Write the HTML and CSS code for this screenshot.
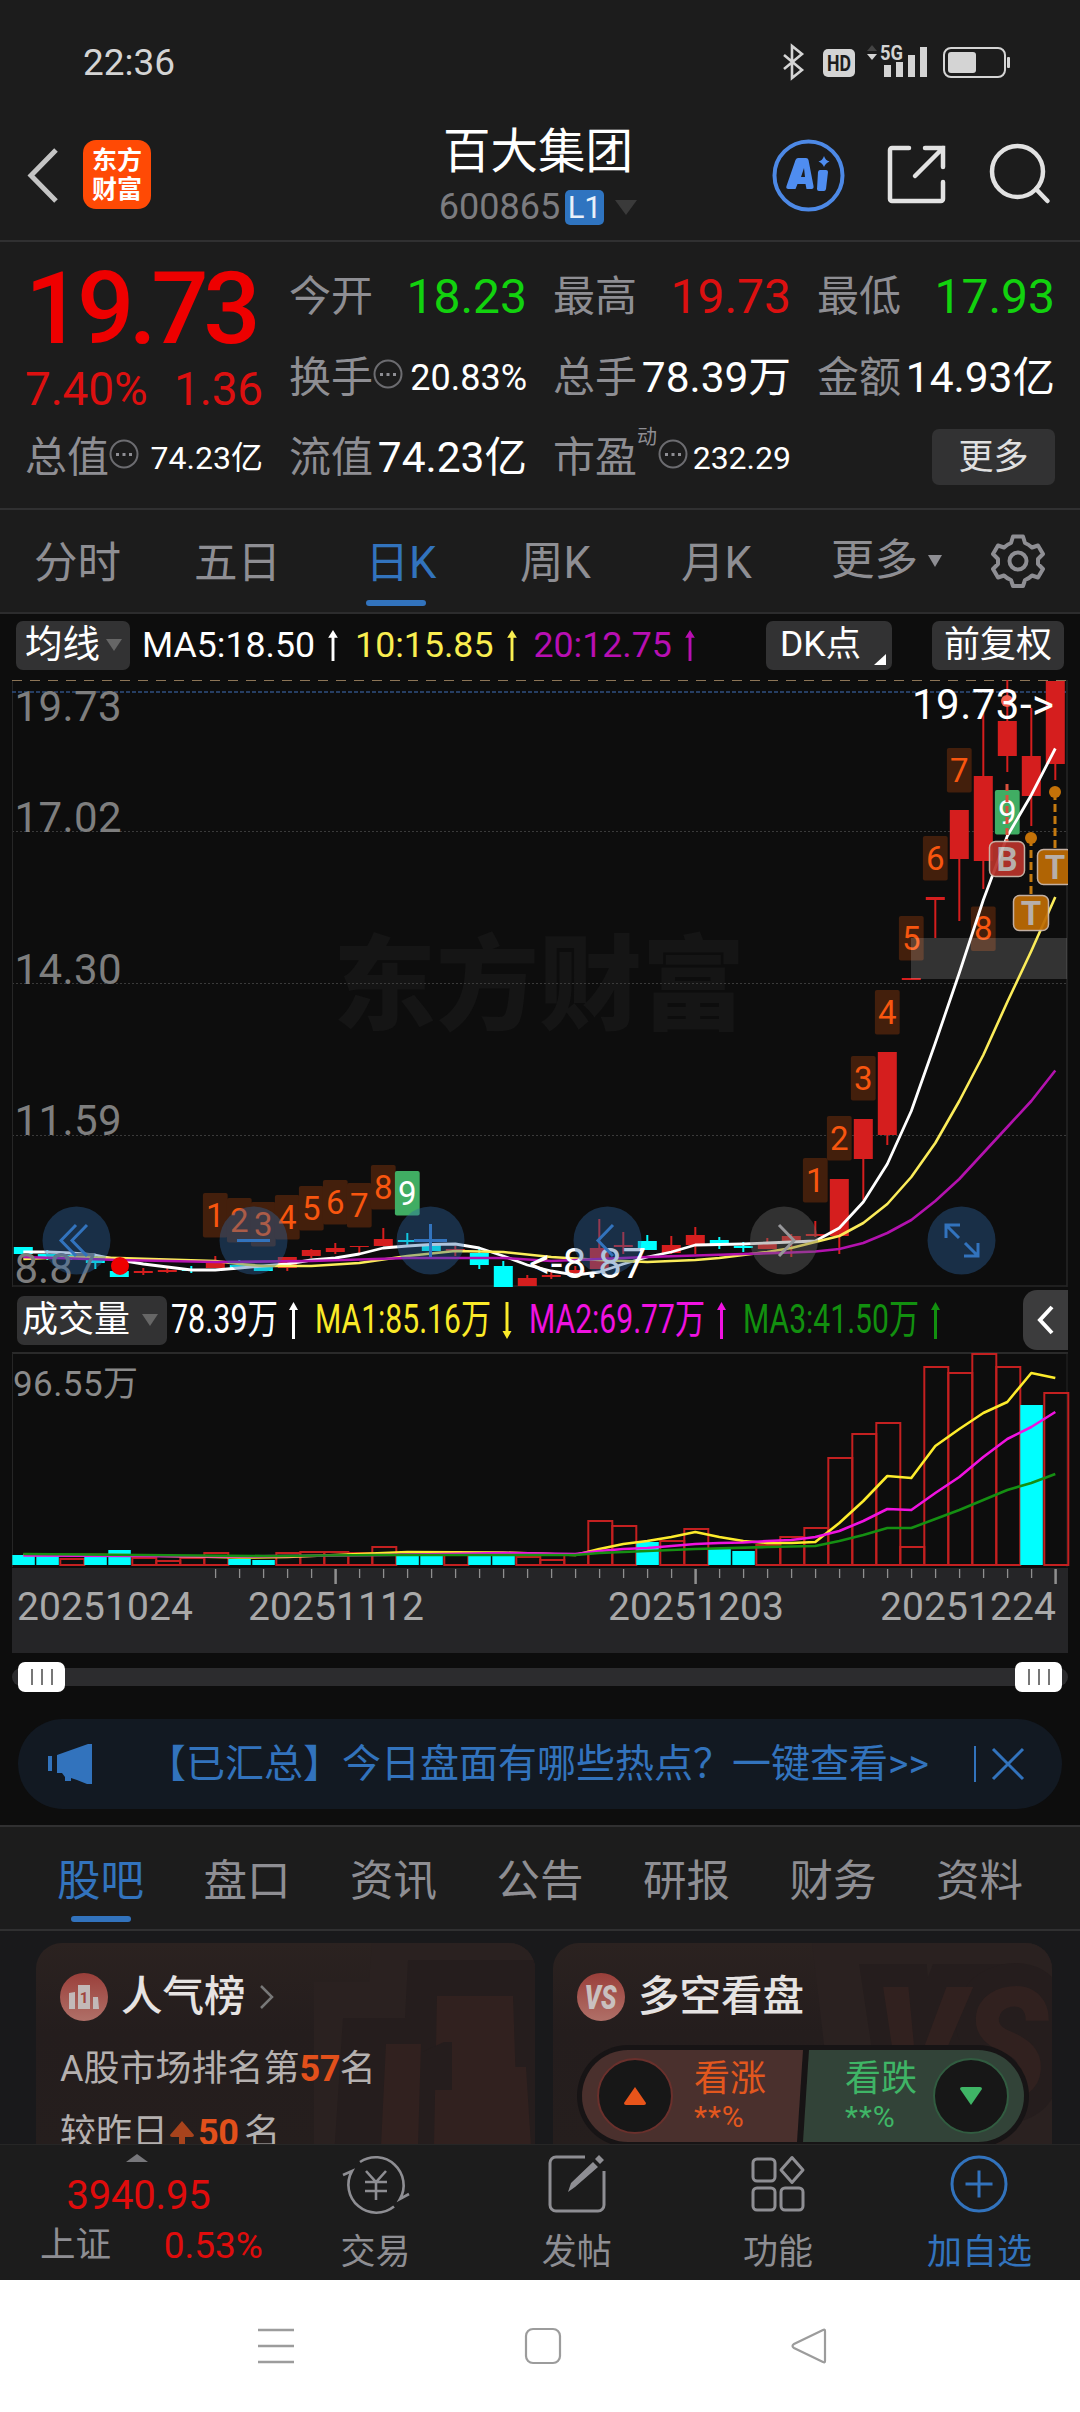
FILE: index.html
```html
<!DOCTYPE html>
<html lang="zh-CN">
<head>
<meta charset="utf-8">
<title>百大集团 600865</title>
<link rel="stylesheet" href="styles.css">
</head>
<body>
<div class="app">
  <div class="statusbar">
    <span class="clock">22:36</span>
    <svg class="status-icons" width="240" height="44" viewBox="775 40 240 44">
      <path d="M784 55l18 15-10 8V46l10 8-18 15" fill="none" stroke="#d4d4d4" stroke-width="2.6"/>
      <rect x="823" y="49" width="32" height="28" rx="5" fill="#d4d4d4"/>
      <text x="839" y="71" text-anchor="middle" font-size="22.500" font-weight="700" fill="#1c1c1c" textLength="24" lengthAdjust="spacingAndGlyphs">HD</text>
      <path d="M867 51l5-6 5 6z" fill="#444"/><path d="M867 54h10l-5 6z" fill="#d4d4d4"/>
      <text x="880" y="60" font-size="21" font-weight="700" fill="#d4d4d4" textLength="23" lengthAdjust="spacingAndGlyphs">5G</text>
      <path d="M884 65h7v12h-7zM896 62h7v15h-7zM908 55h7v22h-7zM920 47h7v30h-7z" fill="#d4d4d4"/>
      <rect x="944" y="48" width="61" height="29" rx="7" fill="none" stroke="#d4d4d4" stroke-width="2"/>
      <rect x="948" y="52" width="28" height="21" rx="3" fill="#d4d4d4"/>
      <rect x="1007" y="57" width="3" height="11" rx="1" fill="#d4d4d4"/>
    </svg>
  </div>

  <header class="header">
    <div class="header-left">
      <svg width="36" height="60" viewBox="25 144 36 60"><path d="M56 149L31 174.500l25 25.500" fill="none" stroke="#c4c4c4" stroke-width="5"/></svg>
      <div class="logo"><span>东方</span><span>财富</span></div>
    </div>
    <div class="header-title">
      <h1>百大集团</h1>
      <div class="code"><span>600865</span><b>L1</b><i class="tri code-tri"></i></div>
    </div>
    <div class="header-right">
      <svg width="74" height="74" viewBox="771 137 74 74">
        <circle cx="808.500" cy="174.500" r="34" fill="none" stroke="#4d89e6" stroke-width="4"/>
        <path fill="#4f8df0" fill-rule="evenodd" d="M798 157h8q2 0 2.500 2l5 26q.5 3-2 3h-5l-1-5h-8l-2 5h-7q-3 0-2-3l9-26q1-2 2.500-2zM801 176h4l-1-9zM820 169h6q2 0 2 2l-2 17q-.5 2-2 2h-5q-2 0-2-2l1-17q.5-2 2-2zM824 155q1.500 4.500 5.500 5.500-4 1.500-5.500 5.500-1.500-4-5.500-5.500 4-1 5.500-5.500z"/>
      </svg>
      <svg width="62" height="62" viewBox="886 144 62 62"><path d="M909 148h-17a2 2 0 0 0-2 2v49a2 2 0 0 0 2 2h49a2 2 0 0 0 2-2v-17M925 148h18v19M943 148l-28 28" fill="none" stroke="#e2e2e2" stroke-width="4.500" stroke-linecap="round"/></svg>
      <svg width="62" height="64" viewBox="990 143 62 64"><circle cx="1018.500" cy="171.500" r="25.500" fill="none" stroke="#e2e2e2" stroke-width="4.500"/><path d="M1037 189l11.500 12" stroke="#e2e2e2" stroke-width="4.500" stroke-linecap="round"/></svg>
    </div>
  </header>

  <section class="quote">
    <div class="price-block">
      <div class="price">19.73</div>
      <div class="change"><span>7.40%</span><span>1.36</span></div>
    </div>
    <div class="cell"><label>今开</label><span class="num big down">18.23</span></div>
    <div class="cell"><label>最高</label><span class="num big up">19.73</span></div>
    <div class="cell"><label>最低</label><span class="num big down">17.93</span></div>
    <div class="cell"><label>换手</label><svg class="dots" viewBox="0 0 30 30"><use href="#more-dots"/></svg><span class="num mid">20.83%</span></div>
    <div class="cell"><label>总手</label><span class="num">78.39万</span></div>
    <div class="cell"><label>金额</label><span class="num">14.93亿</span></div>
    <div class="cell"><label>总值</label><svg class="dots" viewBox="0 0 30 30"><use href="#more-dots"/></svg><span class="num small">74.23亿</span></div>
    <div class="cell"><label>流值</label><span class="num">74.23亿</span></div>
    <div class="cell"><label>市盈</label><sup>动</sup><svg class="dots" viewBox="0 0 30 30"><g id="more-dots"><circle cx="15" cy="15" r="13.500" fill="none" stroke="#6c6c70" stroke-width="2"/><path d="M7 14h3v3H7zM13.500 14h3v3h-3zM20 14h3v3h-3z" fill="#8e8e93"/></g></svg><span class="num small">232.29</span></div>
    <div class="cell cell-end"><button class="more">更多</button></div>
  </section>

  <nav class="periods">
    <span>分时</span><span>五日</span><span class="on">日K</span><span>周K</span><span>月K</span>
    <span class="with-tri">更多<i class="tri period-tri"></i></span>
    <svg width="56" height="56" viewBox="-28 -28 56 56" fill="none" stroke="#8e8e93" stroke-width="4"><path d="M-5-24.500H5L7-18q4 1.500 7 4.500l6-2 5 8.500-5 5v5l5 5-5 8.500-6-2q-3 3-7 4.500l-2 6H-5l-2-6q-4-1.500-7-4.500l-6 2-5-8.500 5-5v-5l-5-5 5-8.500 6 2q3-3 7-4.500z" stroke-linejoin="round"/><circle r="8.500"/></svg>
  </nav>

  <main class="chart">
    <div class="ma-row">
      <button class="chip chip-ma">均线<i class="tri chip-tri"></i></button>
      <div class="ma-values">
        <span class="w">MA5:18.50</span><svg class="arrow w" viewBox="0 0 12 32"><path d="M6 0l5 8H7.500v24h-3V8H1z"/></svg>
        <span class="y">10:15.85</span><svg class="arrow y" viewBox="0 0 12 32"><path d="M6 0l5 8H7.500v24h-3V8H1z"/></svg>
        <span class="p">20:12.75</span><svg class="arrow p" viewBox="0 0 12 32"><path d="M6 0l5 8H7.500v24h-3V8H1z"/></svg>
      </div>
      <button class="chip chip-dk">DK点<svg width="12" height="11" viewBox="0 0 12 11"><path d="M12 0v11H0z" fill="#fff"/></svg></button>
      <button class="chip chip-fq">前复权</button>
    </div>

    <svg id="kline" class="plot" width="1080" height="611" viewBox="0 677 1080 611"></svg>

    <div class="vol-row">
      <button class="chip chip-vol">成交量<i class="tri chip-tri"></i></button>
      <svg class="vol-values" width="780" height="50" viewBox="170 1295 780 50" font-size="40">
        <g fill="#fff"><text x="171" y="1333" textLength="107" lengthAdjust="spacingAndGlyphs">78.39万</text><path d="M293.500 1302l4.500 8h-3v29h-3v-29h-3z"/></g>
        <g fill="#faea28"><text x="315" y="1333" textLength="176" lengthAdjust="spacingAndGlyphs">MA1:85.16万</text><path d="M507 1339l4.500-8h-3v-29h-3v29h-3z"/></g>
        <g fill="#f012e0"><text x="529" y="1333" textLength="176" lengthAdjust="spacingAndGlyphs">MA2:69.77万</text><path d="M721.500 1302l4.500 8h-3v29h-3v-29h-3z"/></g>
        <g fill="#12900f"><text x="743" y="1333" textLength="176" lengthAdjust="spacingAndGlyphs">MA3:41.50万</text><path d="M935.500 1302l4.500 8h-3v29h-3v-29h-3z"/></g>
      </svg>
      <button class="fold"><svg width="20" height="30" viewBox="0 0 20 30"><path d="M16 2L4 15l12 13" fill="none" stroke="#fff" stroke-width="4"/></svg></button>
    </div>

    <svg id="volume" class="plot" width="1080" height="216" viewBox="0 1352 1080 216"></svg>
    <svg id="axis" class="axis" width="1056" height="85" viewBox="12 1567 1056 85"></svg>

    <div class="slider"><i></i><i></i></div>

    <div class="banner">
      <svg width="48" height="42" viewBox="0 0 48 42" fill="#3273bd"><path d="M1 13h4v15H1zM10 12L41 1h4v40h-5l-10-4-6-2v3h-6v-4l-3-4h-5z"/></svg>
      <p>【已汇总】今日盘面有哪些热点？一键查看&gt;&gt;</p>
      <i class="divider"></i>
      <svg width="34" height="34" viewBox="0 0 34 34"><path d="M2 2l30 30M32 2L2 32" stroke="#3273bd" stroke-width="3"/></svg>
    </div>
  </main>

  <nav class="tabs">
    <span class="on">股吧</span><span>盘口</span><span>资讯</span><span>公告</span><span>研报</span><span>财务</span><span>资料</span>
  </nav>

  <section class="cards">
    <article class="card rank">
      <svg class="mark" width="499" height="203" viewBox="36 1942 499 203">
        <path d="M314 1981h55l3-39h163v203H314z" fill="#2a2120"/>
        <path d="M343 2017h62l3-58h135l6 87v110H334z" fill="#251d1d"/>
        <path d="M437 1995h76l5 150h-84zM386 2043h35l-3 102h-37zM495 2066h31l5 79h-34z" fill="#31211f"/>
        <path d="M422 2051l22-10h8v48h-20v-27h-10z" fill="#251d1d"/>
      </svg>
      <h2><svg width="48" height="48" viewBox="0 0 48 48"><use href="#disc"/><path d="M9 20l6-1v17H9zM18 12h12v24H18zM33 24h5l1 12h-6z" fill="#c2b9b8"/><text x="24" y="30" text-anchor="middle" font-size="15" font-weight="700" fill="#a04540">1</text></svg>人气榜<svg width="16" height="26" viewBox="0 0 16 26"><path d="M2 2l11 11L2 24" fill="none" stroke="#777" stroke-width="2.500"/></svg></h2>
      <p>A股市场排名第<b>57</b>名</p>
      <p>较昨日<svg width="26" height="30" viewBox="0 0 26 30"><path d="M13 1l12 14q0 2-2 2h-7v13h-6V17H3q-2 0-2-2z" fill="#a8431c"/></svg><b>50</b><span class="sp">名</span></p>
    </article>
    <article class="card versus">
      <svg class="mark" width="499" height="203" viewBox="553 1942 499 203">
        <path d="M812 1942h240v203H836z" fill="#2a2120"/>
        <text x="874" y="2098" font-size="158" font-weight="900" font-style="italic" fill="#31211f" stroke="#251d1d" stroke-width="46" paint-order="stroke" textLength="174" lengthAdjust="spacingAndGlyphs">VS</text>
      </svg>
      <h2><svg width="48" height="48" viewBox="0 0 48 48"><defs><linearGradient id="dg" x1="0" y1="0" x2="0" y2="1"><stop offset="0" stop-color="#9a3f3a"/><stop offset="1" stop-color="#b07068"/></linearGradient></defs><circle id="disc" cx="24" cy="24" r="24" fill="url(#dg)"/><text x="23.500" y="36" text-anchor="middle" font-size="33" font-weight="900" font-style="italic" fill="#c9c0bf" textLength="32" lengthAdjust="spacingAndGlyphs">VS</text></svg>多空看盘</h2>
      <div class="vote">
        <div class="bull"><i><svg width="24" height="20" viewBox="0 0 24 20"><path d="M12 1l11 16q0 2-2 2H3q-2 0-2-2z" fill="#e8541a"/></svg></i><div><span>看涨</span><small>**%</small></div></div>
        <div class="bear"><div><span>看跌</span><small>**%</small></div><i><svg width="24" height="20" viewBox="0 0 24 20"><path d="M12 19L1 3q0-2 2-2h18q2 0 2 2z" fill="#3fb566"/></svg></i></div>
      </div>
    </article>
  </section>

  <footer class="toolbar">
    <div class="index">
      <svg width="22" height="8" viewBox="0 0 22 8"><path d="M11 0l11 8H0z" fill="#77777b"/></svg>
      <strong>3940.95</strong>
      <div><span>上证</span><em>0.53%</em></div>
    </div>
    <div class="tool"><svg width="68" height="62" viewBox="-34 -31 68 62" fill="none" stroke="#8e8e93" stroke-width="2.600"><path d="M-16-23A28 28 0 0 1 24 14L33 9M18 21.500A28 28 0 0 1-24-14L-33-10M-10-14L0-3l10-11M0-3v18M-11-3h22M-11 6h22"/></svg><span>交易</span></div>
    <div class="tool"><svg width="60" height="60" viewBox="-30 -30 60 60" fill="none" stroke="#8e8e93" stroke-width="3"><path d="M8-27h-29a6 6 0 0 0-6 6v42a6 6 0 0 0 6 6h42a6 6 0 0 0 6-6V-13"/><path d="M-9 8l3-9L16-22l5 5L-2 3zM18-25l4-4 5 5-4 4z" fill="#8e8e93" stroke="none"/></svg><span>发帖</span></div>
    <div class="tool"><svg width="60" height="60" viewBox="-30 -30 60 60" fill="none" stroke="#8e8e93" stroke-width="3"><rect x="-25" y="-25" width="22" height="22" rx="4"/><rect x="-25" y="4" width="22" height="22" rx="4"/><rect x="3" y="4" width="22" height="22" rx="4"/><path d="M14-26.500l11 12.500-11 12.500L3-14z" stroke-linejoin="round"/></svg><span>功能</span></div>
    <div class="tool on"><svg width="60" height="60" viewBox="-30 -30 60 60" fill="none" stroke="#3273bd" stroke-width="3"><circle r="27"/><path d="M0-13.500v27M-13.500 0h27"/></svg><span>加自选</span></div>
  </footer>

  <div class="sysnav">
    <svg width="38" height="38" viewBox="0 0 38 38"><path d="M1 3h36M1 19h36M1 35h36" stroke="#9c9c9c" stroke-width="2.500"/></svg>
    <svg width="38" height="38" viewBox="0 0 38 38"><rect x="2" y="2" width="34" height="34" rx="7" fill="none" stroke="#9c9c9c" stroke-width="2.200"/></svg>
    <svg width="38" height="38" viewBox="0 0 38 38"><path d="M35 4v30q0 2-2 1L4 21q-3-2 0-4L33 3q2-1 2 1z" fill="none" stroke="#9c9c9c" stroke-width="2.200"/></svg>
  </div>
</div>
<script src="chart.js"></script>
</body>
</html>
```
FILE: styles.css
```css
* { box-sizing: border-box; margin: 0; padding: 0; }
body {
  background: #0d0d0d;
  font-family: Roboto, "Noto Sans CJK SC", sans-serif;
  color: #fff;
  line-height: 1;
}
svg { display: block; flex: none; }
svg text { font-family: Roboto, "Noto Sans CJK SC", sans-serif; }
button { border: 0; color: inherit; font: inherit; }
i, em { font-style: normal; }
.app { width: 1080px; height: 2412px; overflow: hidden; display: flex; flex-direction: column; }
.app > * { flex: none; }

.tri {
  display: inline-block;
  border: solid transparent;
  border-bottom-width: 0;
}

.statusbar {
  height: 124px; padding: 0 65px 0 83px;
  display: flex; justify-content: space-between; align-items: center;
  background: #1c1c1c;
}
.clock { font-size: 37px; color: #d4d4d4; }

.header {
  height: 118px; padding: 0 29px 0 25px;
  display: grid; grid-template-columns: 1fr 200px 1fr; grid-template-rows: 101px; align-items: center;
  background: #1c1c1c; border-bottom: 2px solid #303031;
}
.header-left { display: flex; align-items: center; gap: 22px; }
.logo {
  width: 68px; height: 69px; border-radius: 13px; background: #ff4a05;
  display: flex; flex-direction: column; align-items: center; justify-content: center; gap: 4px;
  font-size: 25px; font-weight: 700;
}
.header-title { display: flex; flex-direction: column; align-items: center; align-self: start; gap: 13px; padding-top: 5px; }
.header-title h1 { font-size: 47.500px; font-weight: 400; white-space: nowrap; line-height: 47px; }
.code { display: flex; align-items: center; gap: 5px; font-size: 36px; color: #7c7c80; }
.code b {
  width: 39px; height: 35px; border-radius: 5px; background: #2f74c0; color: #e8f0fa;
  font-size: 31px; font-weight: 400; line-height: 36px; text-align: center;
}
.code-tri { border-width: 15px 11px 0; border-top-color: #3a3a3a; margin-left: 6px; }
.header-right { display: flex; align-items: center; justify-content: flex-end; gap: 41px; }

.quote {
  height: 268px; padding: 15px 25px 0;
  display: grid; grid-template-columns: repeat(4, minmax(0, 1fr)); grid-template-rows: repeat(3, 80.500px); column-gap: 26px;
  background: #1c1c1c; border-bottom: 2px solid #303031;
}
.price-block { grid-row: span 2; display: flex; flex-direction: column; }
.price { font-size: 101px; font-weight: 500; color: #ee0000; letter-spacing: -5.500px; height: 103px; line-height: 103px; }
.change { display: flex; justify-content: space-between; font-size: 46px; letter-spacing: -.2px; color: #dc1010; padding-top: 6px; }
.cell { display: flex; align-items: center; white-space: nowrap; }
.cell label { font-size: 42px; color: #8e8e93; }
.cell sup { font-size: 20px; color: #8e8e93; align-self: flex-start; margin: 9px 1px 0 0; }
.dots { width: 30px; height: 30px; margin: -8px 0 0 0; }
.num { margin-left: auto; font-size: 42.500px; }
.big { font-size: 48px; }
.mid { font-size: 36px; }
.small { font-size: 32px; }
.up { color: #dc1010; }
.down { color: #12d20e; }
.cell-end { justify-content: flex-end; }
.more { width: 123px; height: 56px; border-radius: 7px; background: #323233; color: #e0e0e0; font-size: 35px; margin-top: -2px; }

.periods {
  height: 104px; padding: 0 34px;
  display: grid; grid-template-columns: 160px 171.500px 154.500px 161px 150px 1fr auto; align-items: center;
  background: #1c1c1c; border-bottom: 2px solid #2c2c2d;
  font-size: 43.500px; color: #8e8e93;
}
.periods span { height: 102px; line-height: 108px; display: flex; flex-direction: column; }
.periods .on::after, .tabs .on::after {
  content: ""; width: 60px; height: 6px; border-radius: 3px; background: #3273bd; margin-top: -18px; flex: none;
}
.on { color: #3273bd; }
.periods .with-tri { flex-direction: row; align-items: center; gap: 10px; }
.period-tri { border-width: 12px 7px 0; border-top-color: #8e8e93; }

.chart { height: 1211px; display: flex; flex-direction: column; }
.chart > * { flex: none; }
.ma-row { height: 63px; padding: 0 16px; display: flex; align-items: center; }
.chip {
  height: 49px; border-radius: 7px; background: #323233; display: flex; align-items: center;
  font-size: 37.500px; padding: 0 0 1px 9px;
}
.chip-ma { width: 114px; }
.chip-tri { border-width: 12px 8px 0; border-top-color: #666; margin-left: 6px; }
.ma-values { display: flex; align-items: center; margin-left: 12px; font-size: 35.700px; width: 624px; }
.arrow { width: 12px; height: 31px; margin: 0 17px 0 12px; fill: currentColor; }
.ma-values .arrow.w, .ma-values .arrow.y { margin-right: 16px; }
.w { color: #fff; }
.y { color: #f9ee50; }
.p { color: #b80fb2; }
.chip-dk { width: 126px; padding: 0 6px 1px 14px; font-size: 35.500px; justify-content: space-between; }
.chip-dk svg { align-self: flex-end; margin-bottom: 4px; }
.chip-fq { width: 132px; margin-left: 40px; padding-left: 12px; font-size: 36px; }
.plot { width: 1080px; }

.vol-row { height: 64px; padding: 0 12px 0 17px; display: flex; align-items: center; }
.chip-vol { width: 150px; padding-left: 5px; font-size: 36px; }
.chip-vol .chip-tri { margin-left: 12px; }
.vol-values { margin-left: 3px; }
.fold {
  width: 45px; height: 60px; margin-left: auto; border-radius: 14px 0 0 14px; background: #3c3c3d;
  display: flex; align-items: center; justify-content: center;
}
.axis { margin-left: 12px; background: #252527; }
.slider {
  margin: 15px 12px 0; height: 18px; border-radius: 9px; background: #2c2c2e; padding: 0 6px;
  display: flex; justify-content: space-between; align-items: center;
}
.slider i {
  width: 47px; height: 30px; border-radius: 7px; background: #fff;
  display: flex; align-items: center; justify-content: center;
}
.slider i::before { content: ""; width: 18px; height: 16px; border: solid #777; border-width: 0 2px; background: linear-gradient(#777, #777) center / 2px 100% no-repeat; }
.banner {
  margin: 33px 18px 0; height: 90px; border-radius: 45px; background: #121922; padding: 0 37px 0 29px;
  display: flex; align-items: center; color: #3273bd; font-size: 39px; white-space: nowrap;
}
.banner p { margin-left: 52px; }
.divider { width: 2px; height: 36px; background: #3273bd; margin-left: auto; margin-right: 15px; }

.tabs {
  height: 106px; padding: 0 57px; background: #1c1c1c; border: solid #303031; border-width: 2px 0;
  display: flex; justify-content: space-between; font-size: 43.500px; color: #8e8e93;
}
.tabs span { display: flex; flex-direction: column; align-items: center; line-height: 109px; height: 100%; }
.tabs .on { color: #3273bd; }
.tabs .on::after { margin-top: -20px; }

.cards { height: 213px; padding: 12px 28px 0 36px; display: flex; gap: 18px; background: #19191b; overflow: hidden; }
.card {
  position: relative; overflow: hidden;
  width: 499px; height: 203px; border-radius: 26px 26px 0 0; padding: 30px 24px 0;
  background: linear-gradient(#2b2220, #241d1d 90px, #251e1d); color: #b4b0af; font-size: 36px;
}
.card > * { position: relative; }
.card .mark { position: absolute; left: 0; top: 0; margin: 0; }
.card h2 { display: flex; align-items: center; gap: 13px; font-size: 41.500px; font-weight: 500; color: #e6e3e2; height: 48px; }
.card p { display: flex; align-items: center; height: 64px; }
.card p b { color: #e2501b; font-weight: 700; letter-spacing: -.5px; }
.rank h2 + p { margin-top: 16px; }
.rank p svg { margin: 4px 3px 0 1px; }
.rank .sp { margin-left: 6px; }
.versus { padding-right: 23px; }
.vote {
  height: 102px; margin-top: 24px; border-radius: 51px; padding: 5px; background: #171415;
  display: flex; font-size: 36px;
}
.bull, .bear { height: 92px; display: flex; align-items: center; justify-content: space-between; }
.bull { width: 221px; border-radius: 46px 0 0 46px; background: #4a302d; color: #e2571e; padding: 0 37px 0 15px; clip-path: polygon(0 0, 100% 0, calc(100% - 6px) 100%, 0 100%); }
.bear { flex: 1; border-radius: 0 46px 46px 0; background: #324338; color: #3fb566; padding: 0 15px 0 42px; clip-path: polygon(6px 0, 100% 0, 100% 100%, 0 100%); }
.bull div, .bear div { display: flex; flex-direction: column; gap: 5px; }
.vote small { font-size: 30px; letter-spacing: 1px; }
.vote i { width: 76px; height: 76px; border-radius: 50%; background: #171717; border: 2px solid #6a302c; display: flex; align-items: center; justify-content: center; }
.vote .bear i { border-color: #315c40; }

.toolbar { height: 136px; background: #1c1c1c; border-top: 1px solid #262626; display: flex; }
.index { width: 275px; display: flex; flex-direction: column; align-items: center; padding-top: 9px; }
.index strong { font-size: 40px; font-weight: 400; color: #e00c0c; margin-top: 14px; letter-spacing: -.2px; padding-left: 2px; }
.index div { align-self: stretch; display: flex; justify-content: space-between; align-items: center; padding: 0 12px 0 40px; margin-top: 11px; font-size: 35.500px; color: #8e8e93; }
.index em { color: #e00c0c; font-size: 37px; }
.tool { width: 201.300px; height: 135px; display: flex; flex-direction: column; align-items: center; justify-content: space-between; padding: 9px 0 10px; font-size: 35px; color: #8e8e93; }
.tool.on { color: #3273bd; }

.sysnav { height: 132px; background: #fff; display: flex; align-items: center; justify-content: space-between; padding: 0 252px 0 257px; }
```
FILE: chart.js
```js
const STEP = 24, X0 = 23.3;
const cx = i => X0 + STEP * i;
const RED = '#d51e1e', CYAN = '#00ffff';
const rect = (x, y, w, h, fill, extra = '') => `<rect x="${x}" y="${y}" width="${w}" height="${h}" fill="${fill}" ${extra}/>`;
const line = (x1, y1, x2, y2, stroke, w = 1, extra = '') => `<path d="M${x1} ${y1}L${x2} ${y2}" stroke="${stroke}" stroke-width="${w}" ${extra}/>`;
const text = (x, y, s, size, fill, extra = '') => `<text x="${x}" y="${y}" font-size="${size}" fill="${fill}" ${extra}>${s}</text>`;
const poly = (pts, stroke, w) => `<path d="M${pts.map(([i, y]) => cx(i) + ' ' + y).join('L')}" fill="none" stroke="${stroke}" stroke-width="${w}" stroke-linejoin="round"/>`;
const seq = (start, ys) => ys.map((y, k) => [start + k, y]);

/* [up?, body top, body bottom, wick top, wick bottom] */
const candles = [
  [0,1247,1254,1247,1254],[0,1254,1257,1250,1260],[0,1255,1257,1252,1260],[0,1259,1263,1255,1269],[0,1271,1277,1271,1277],
  [1,1271,1273,1268,1275],[1,1270,1272,1267,1273],[0,1269,1271,1266,1273],[1,1263,1268,1256,1268],[0,1265,1268,1260,1268],
  [0,1266,1271,1266,1271],[1,1257,1268,1257,1271],[1,1250,1256,1249,1258],[1,1248,1252,1243,1254],[1,1246,1247,1246,1253],
  [1,1239,1246,1228,1246],[0,1240,1242,1233,1245],[0,1245,1251,1245,1251],[1,1249,1251,1246,1256],[0,1253,1265,1247,1269],
  [0,1266,1287,1261,1287],[1,1278,1286,1275,1286],[1,1275,1277,1272,1279],[1,1270,1273,1266,1275],[1,1248,1269,1219,1269],
  [1,1245,1247,1232,1254],[0,1241,1250,1235,1250],[1,1245,1253,1236,1254],[1,1235,1245,1227,1254],[0,1240,1244,1237,1249],
  [0,1246,1248,1242,1252],[1,1242,1249,1238,1249],[1,1236,1241,1234,1257],[1,1234,1236,1221,1237],[1,1179,1236,1179,1254],
  [1,1119,1159,1119,1200],[1,1052,1135,1052,1145],[1,978,980,978,980],[1,897,900,897,938],[1,810,859,810,921],
  [1,776,861,713,889],[1,721,756,680,772],[1,756,796,708,826],[1,681,764,681,780]
];
const ma5 = seq(0, [1252,1252,1253,1255,1260,1264,1267,1270,1270,1268,1266,1264,1260,1258,1254,1248,1246,1244.5,1244,1248,1256,1265,1271,1275,1272,1264,1257,1252,1245,1244.5,1244,1243,1242,1241,1228,1202,1164,1111,1043,973,900,836,795,748.5]);
const ma10 = [[0,1259],[2,1257],[4,1258],[8,1261],[9,1264],[10,1266],[12,1266],[14,1263],[16,1256],[18,1251],[20,1252],[22,1257],[24,1260],[26,1262],[28,1260],[29,1258],...seq(30,[1255,1252,1248,1242,1236,1223,1204,1177,1143,1101,1055,1002,951,897])];
const ma20 = [[0,1257],[4,1260],[8,1262],[12,1261],[16,1258],[20,1258],[22,1261],[24,1259],[26,1257],[28,1255.5],[30,1254],[32,1252.5],...seq(33,[1251.5,1249,1243,1233,1220,1201,1179,1153,1127,1101,1070.5])];
const counts = [[8,1193],[9,1198],[10,1202],[11,1195],[12,1186],[13,1180],[14,1183],[15,1165],[16,1171]];
const counts2 = [[33,1158],[34,1116],[35,1056],[36,990],[37,916],[38,836],[39,748],[40,906.5],[41,790]];

let k = '';
k += text(333, 1022, '东方财富', 103, '#151515', 'font-weight="900"');
[831.5, 983.5, 1135.5].forEach(y => k += line(12, y, 1067, y, '#3a3a3a', 1, 'stroke-dasharray="2 2"'));
k += line(12.5, 680, 12.5, 1287, '#262626', 1) + line(1067, 680, 1067, 1287, '#262626', 1.5) + line(12, 1286, 1067, 1286, '#262626', 1.5);
k += line(12, 680.5, 1067, 680.5, '#8d7557', 1, 'stroke-dasharray="10 8"');
k += line(12, 692, 1067, 692, '#2f4f80', 1.6, 'stroke-dasharray="4 2"');
candles.forEach(([up, t, b, wt, wb], i) => {
  const c = up ? RED : CYAN;
  k += line(cx(i), wt, cx(i), wb, c, 2) + rect(cx(i) - 9.5, t, 19, b - t, c);
});
[counts, counts2].forEach(list => list.forEach(([i, y], n) => {
  const nine = n === 8;
  k += rect(cx(i) - 12.4, y, 24.8, 44.5, nine ? '#40ad63' : '#431f0c', 'rx="2"');
  k += text(cx(i), y + 33.5, n + 1, 33, nine ? '#fff' : '#f8560f', 'text-anchor="middle"');
}));
k += rect(911, 938, 156, 41, '#fff', 'fill-opacity=".16"');
k += poly(ma5, '#fff', 2.8) + poly(ma10, '#fbec5a', 2.6) + poly(ma20, '#b312ae', 2.6);
k += `<circle cx="120" cy="1266" r="9" fill="#ee0000"/><circle cx="1007" cy="701" r="6" fill="#f4604f"/>`;
k += line(1007, 784, 1007, 842, '#d8503c', 3, 'stroke-dasharray="7 4"');
k += line(1031, 838, 1031, 895, '#c47a10', 3, 'stroke-dasharray="8 4"') + line(1055, 792, 1055, 849, '#c47a10', 3, 'stroke-dasharray="8 4"');
k += `<circle cx="1031" cy="838" r="6" fill="#c47208"/><circle cx="1055" cy="792" r="6" fill="#c47208"/>`;
k += `<clipPath id="frame"><path d="M12 677H1068V1288H12z"/></clipPath><g clip-path="url(#frame)" opacity=".93">`;
[[989.5, 841.5, 'B', '#b8332b'], [1013.5, 895.5, 'T', '#bd6b04'], [1037.5, 849.5, 'T', '#bd6b04']].forEach(([x, y, s, f]) => {
  k += rect(x, y, 35, 35, f, 'rx="6" stroke="#d0bcae" stroke-width="1.5"') + text(x + 17.5, y + 29, s, 33, '#c4bcb6', 'text-anchor="middle" font-weight="700"');
});
k += '</g>';
[['19.73', 721], ['17.02', 832], ['14.30', 984], ['11.59', 1135], ['8.87', 1283]].forEach(([s, y]) => k += text(14.5, y, s, 42, '#7e7e7e', s.length > 4 ? 'textLength="107"' : ''));
k += text(912, 719, '19.73-&gt;', 42, '#fff', 'textLength="142"');
k += text(529, 1278, '&lt;-8.87', 42, '#fff', 'textLength="117"');
const icons = ['M76 1225l-15 15.5 15 15.5M87 1225l-15 15.500 15 15.500', 'M237 1240.500h33', 'M414 1240.500h33M430.500 1224v33', 'M613 1225l-15 15.500 15 15.500', 'M779 1225l15 15.500-15 15.500', 'M946 1238v-13h14M946 1225l13 13M978 1243v13h-14M978 1256l-13-13'];
[76.5, 253.5, 430.5, 607.5, 784, 961.5].forEach((x, n) => {
  const off = n === 4;
  k += `<circle cx="${x}" cy="1240.500" r="34" fill="${off ? '#6b6b6b' : '#2c66a6'}" fill-opacity=".38"/><path d="${icons[n]}" fill="none" stroke="${off ? '#97979a' : '#3273bd'}" stroke-width="3"/>`;
});
document.getElementById('kline').innerHTML = k;

/* bar tops; falling days are filled */
const tops = [1555,1555,1559,1555,1550,1558,1561,1558,1553,1559,1560,1553,1552,1552,1553,1547,1555,1555,1555,1554,1554,1557,1560,1554,1521,1526,1542,1541,1529,1549,1551,1545,1537,1528,1458,1434,1423,1547,1367,1373,1354,1367,1405,1393];
const falling = new Set([0,1,3,4,9,10,16,17,19,20,26,29,30,42]);
let v = line(12, 1353, 1068, 1353, '#2a2a2a', 2) + line(12.5, 1353, 12.5, 1567, '#262626') + line(1067, 1353, 1067, 1567, '#262626');
v += text(13, 1396, '96.55万', 35, '#8a8a8a', 'textLength="125"');
tops.forEach((t, i) => {
  const x = cx(i) - 12;
  v += falling.has(i) ? rect(x + 1, t, 22.5, 1565 - t, CYAN) : rect(x + 1, t, 24, 1565 - t, 'none', 'stroke="#c32020" stroke-width="2"');
});
v += poly([[0,1555],[4,1555],[9,1557.5],[11,1557],[14,1554],[16,1552],[20,1552.5],[23,1555],...seq(24,[1549,1544,1541,1537,1532,1537,1541,1543,1543,1542,1523,1501,1476,1478,1446,1429,1413,1402,1373,1378])], '#fdec2c', 2.6);
v += poly([[0,1555.5],[9,1556.5],[15,1555],[20,1553],[23,1554],...seq(24,[1551,1549,1548,1546,1544,1543,1542.5,1541,1540,1537,1531,1521,1509,1510,1493,1477,1457,1439,1427,1412])], '#f012e0', 2.6);
v += poly([[0,1554],[10,1556],[15,1555],[23,1555],[24,1553],[28,1549],[31,1547],[33,1546],...seq(34,[1541,1535,1528,1528,1519,1510,1500,1490,1483,1474])], '#158f12', 2.6);
document.getElementById('volume').innerHTML = v;

let a = '';
for (let i = 8; i < 44; i++) {
  const major = i === 13 || i === 28 || i === 43;
  a += line(cx(i) + .3, 1568, cx(i) + .3, major ? 1583 : 1577, '#8f8f8f', major ? 2.5 : 1.3);
}
[['20251024', 17], ['20251112', 248], ['20251203', 608], ['20251224', 880]].forEach(([s, x]) => a += text(x, 1619, s, 39, '#a9a9a9', 'textLength="176"'));
document.getElementById('axis').innerHTML = a;
```
